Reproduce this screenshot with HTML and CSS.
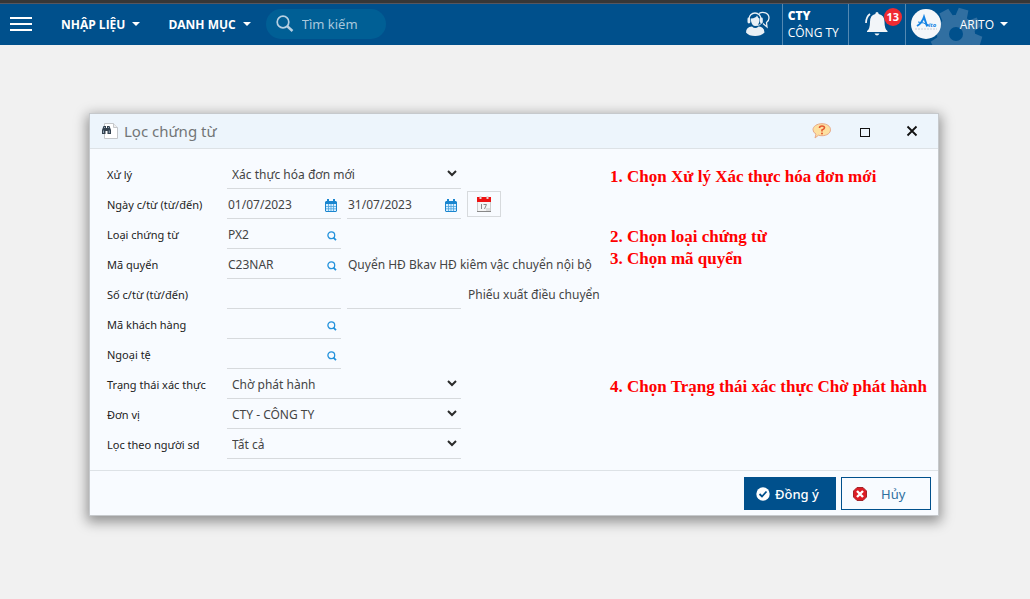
FILE: index.html
```html
<!DOCTYPE html>
<html lang="vi">
<head>
<meta charset="utf-8">
<meta name="viewport" content="width=device-width, initial-scale=1">
<title>Lọc chứng từ</title>
<link rel="stylesheet" href="styles.css">
</head>
<body>
<svg class="sprite" aria-hidden="true">
  <symbol id="i-calendar" viewBox="0 0 12 13">
    <path fill="#1b86cf" d="M1 2h1V0h2v2h4V0h2v2h1l1 1v9l-1 1H1l-1-1V3z"/>
    <path fill="#d9efff" d="M1 5h10v7H1z"/>
    <path d="M3.500 5v7M6 5v7M8.500 5v7M1 7.500h10M1 9.800h10" stroke="#4aa3e0" stroke-width=".8"/>
  </symbol>
  <symbol id="i-lookup" viewBox="0 0 10 10">
    <circle cx="4.3" cy="4.3" r="3.4" fill="none" stroke="#2492dc" stroke-width="1.3"/>
    <path d="M6.4 6.6L9 9.2" stroke="#2492dc" stroke-width="1.8"/>
  </symbol>
  <symbol id="i-chevron" viewBox="0 0 10 7">
    <path d="M1 1l4 4 4-4" fill="none" stroke="#2b2b2b" stroke-width="2"/>
  </symbol>
</svg>

<header class="topbar">
  <button class="menu-btn" aria-label="Menu"><svg width="22" height="14" viewBox="0 0 22 14"><path d="M0 1h22M0 7h22M0 13h22" stroke="#fff" stroke-width="2"/></svg></button>
  <nav class="nav">
    <a href="#" class="nav-link">NHẬP LIỆU<span class="caret"></span></a>
    <a href="#" class="nav-link">DANH MỤC<span class="caret"></span></a>
  </nav>
  <label class="search">
    <svg width="18" height="18" viewBox="0 0 18 18"><circle cx="7" cy="7" r="5.8" fill="none" stroke="#b6d0e2" stroke-width="1.7"/><path d="M11 11l5.5 5" stroke="#b6d0e2" stroke-width="2.4"/></svg>
    <input type="search" placeholder="Tìm kiếm" aria-label="Tìm kiếm">
  </label>
  <button class="support" aria-label="Hỗ trợ">
    <svg width="26" height="26" viewBox="0 0 26 26">
      <path d="M14 2.500c4-2.500 10-.5 10 4.500 0 2-1 3.500-2.500 4.500l.5 4.500-4-3.500" fill="none" stroke="#e8eff5" stroke-width="1.3"/>
      <path d="M4 8a6 6 0 0 1 12 0" fill="none" stroke="#e8eff5" stroke-width="1.3"/>
      <rect x="2.5" y="6.500" width="2.800" height="6" rx="1.400" fill="#e8eff5"/><rect x="15" y="6.500" width="2.800" height="6" rx="1.400" fill="#e8eff5"/>
      <path d="M6 7.500q5-.5 6-3 1 2.500 2.500 3V10q-1 5-4.200 5Q7 15 6 10z" fill="#e8eff5"/>
      <path d="M16.500 12q-1 2.500-5 2.500" fill="none" stroke="#e8eff5"/>
      <path d="M1 21.500Q1 16 7 15.500q3.300 3 6.500 0 6 .5 6 6-3 3.500-9.300 3.500T1 21.500z" fill="#e8eff5"/>
    </svg>
  </button>
  <div class="unit"><strong>CTY</strong><span>CÔNG TY</span></div>
  <button class="bell" aria-label="Thông báo">
    <svg width="24" height="24" viewBox="0 0 24 24"><path fill="#f2f5f8" d="M12 0q1.500 0 1.700 2 5.800 1 5.800 8 0 7 3 9v1H2v-1q3-2 3-9 0-7 5.300-8Q10.500 0 12 0zM9.500 21.500h5q-1 2-2.500 2t-2.500-2z"/><path d="M1 11q0-6 4-9" fill="none" stroke="#f2f5f8" stroke-width="1.700"/></svg>
    <span class="badge">13</span>
  </button>
  <div class="account">
    <svg class="gear" width="56" height="56" viewBox="-28 -28 56 56" aria-hidden="true">
      <g fill="#316fa1" transform="rotate(17)"><circle r="19"/><g id="tooth"><path d="M-6 -17l1-9h10l1 9zM-6 17l1 9h10l1-9z"/></g><use href="#tooth" transform="rotate(45)"/><use href="#tooth" transform="rotate(90)"/><use href="#tooth" transform="rotate(135)"/></g><circle r="7" fill="#00508c"/>
    </svg>
    <svg class="avatar" width="30" height="30" viewBox="0 0 30 30" role="img" aria-label="Arito"><circle cx="15" cy="15" r="15" fill="#f5f7fa"/><path d="M6 17q5-3 7-9l3 9" fill="none" stroke="#1683e4" stroke-width="2"/><path d="M7 13q6 0 11 4" fill="none" stroke="#1683e4" stroke-width="1"/><text x="15" y="18" class="logo-word">rito</text><path d="M4 20h22" stroke="#c9ced6" stroke-width="1" stroke-dasharray="2 1"/></svg>
    <button class="account-btn">ARITO<span class="caret"></span></button>
  </div>
</header>

<main class="stage">
  <form class="dialog" role="dialog" aria-labelledby="dlg-title">
    <div class="dialog-head">
      <svg width="16" height="16" viewBox="0 0 16 16"><path d="M2.500.5h9l4 4v11h-13z" fill="#fff" stroke="#c4c7ca"/><path d="M11.500.5v4h4" fill="#eee" stroke="#c4c7ca"/><path fill="#34424f" d="M0 7l1.500-4h2.500v2h1V3h2.500L9 7v4H5.500V8h-2v3H0z"/><path fill="#91a6b8" d="M1 7.500h1V10H1zM6.800 7.500h1V10h-1zM2 4h1v1H2zM6 4h1v1H6z"/></svg>
      <h1 id="dlg-title">Lọc chứng từ</h1>
      <button type="button" class="tool" aria-label="Trợ giúp"><svg width="20" height="16" viewBox="0 0 20 16"><path d="M10 .7c5 0 8.500 2.600 8.500 6s-3.500 6-8.500 6q-2 0-3.500-.5L3 15l1-4Q1 9.500 1 6.700C1 3.300 5 .7 10 .7z" fill="#fde0a0" stroke="#e8a888"/><path d="M7.500 5q0-2 2.500-2t2.500 1.800Q12.500 6 10 7v1.500" fill="none" stroke="#e4572e" stroke-width="1.600"/><circle cx="10" cy="10.400" r="1" fill="#e4572e"/></svg></button>
      <button type="button" class="tool" aria-label="Phóng to"><svg width="10" height="16" viewBox="0 0 10 16"><rect x=".5" y="5.500" width="9" height="8" fill="none" stroke="#111"/></svg></button>
      <button type="button" class="tool" aria-label="Đóng"><svg width="12" height="12" viewBox="0 0 12 12"><path d="M1.500 1.500l9 9M10.500 1.500l-9 9" stroke="#111" stroke-width="1.800"/></svg></button>
    </div>

    <div class="dialog-body">
      <div class="row">
        <label for="act">Xử lý</label>
        <div class="fields"><span class="field wide"><select id="act"><option>Xác thực hóa đơn mới</option></select><svg class="chev" width="10" height="7"><use href="#i-chevron"/></svg></span></div>
        <p class="note">1. Chọn Xử lý Xác thực hóa đơn mới</p>
      </div>
      <div class="row">
        <label for="from">Ngày c/từ (từ/đến)</label>
        <div class="fields">
          <span class="field"><input id="from" value="01/07/2023"><button type="button" class="pick" aria-label="Chọn ngày"><svg width="12" height="13"><use href="#i-calendar"/></svg></button></span>
          <span class="field"><input value="31/07/2023" aria-label="Đến ngày"><button type="button" class="pick" aria-label="Chọn ngày"><svg width="12" height="13"><use href="#i-calendar"/></svg></button></span>
          <button type="button" class="period" aria-label="Chọn kỳ"><svg width="14" height="16" viewBox="0 0 14 16"><path fill="#f4f4f4" d="M0 6h14v10H0z"/><path fill="#ee1111" d="M0 1h14v5H0z"/><path d="M3.500 0v3M10.500 0v3" stroke="#e6d5d5" stroke-width="2"/><path d="M.5 6v9M13.500 6v9" stroke="#ccc"/><path d="M0 15.500h14" stroke="#888"/><path d="M4.500 8v5M6.500 8.500h3l-2 4.500" fill="none" stroke="#888"/><path d="M9 12h4v3H9z" fill="#ddd"/></svg></button>
        </div>
      </div>
      <div class="row">
        <label for="type">Loại chứng từ</label>
        <div class="fields"><span class="field"><input id="type" value="PX2"><button type="button" class="pick" aria-label="Tìm loại chứng từ"><svg width="10" height="10"><use href="#i-lookup"/></svg></button></span></div>
        <p class="note">2. Chọn loại chứng từ</p>
      </div>
      <div class="row">
        <label for="book">Mã quyển</label>
        <div class="fields"><span class="field"><input id="book" value="C23NAR"><button type="button" class="pick" aria-label="Tìm mã quyển"><svg width="10" height="10"><use href="#i-lookup"/></svg></button></span><span class="desc">Quyển HĐ Bkav HĐ kiêm vậc chuyển nội bộ</span></div>
        <p class="note raised">3. Chọn mã quyển</p>
      </div>
      <div class="row">
        <label for="no">Số c/từ (từ/đến)</label>
        <div class="fields"><span class="field"><input id="no"></span><span class="field"><input aria-label="Đến số"></span><span class="desc">Phiếu xuất điều chuyển</span></div>
      </div>
      <div class="row">
        <label for="cust">Mã khách hàng</label>
        <div class="fields"><span class="field"><input id="cust"><button type="button" class="pick" aria-label="Tìm khách hàng"><svg width="10" height="10"><use href="#i-lookup"/></svg></button></span></div>
      </div>
      <div class="row">
        <label for="cur">Ngoại tệ</label>
        <div class="fields"><span class="field"><input id="cur"><button type="button" class="pick" aria-label="Tìm ngoại tệ"><svg width="10" height="10"><use href="#i-lookup"/></svg></button></span></div>
      </div>
      <div class="row">
        <label for="status">Trạng thái xác thực</label>
        <div class="fields"><span class="field wide"><select id="status"><option>Chờ phát hành</option></select><svg class="chev" width="10" height="7"><use href="#i-chevron"/></svg></span></div>
        <p class="note">4. Chọn Trạng thái xác thực Chờ phát hành</p>
      </div>
      <div class="row">
        <label for="unit">Đơn vị</label>
        <div class="fields"><span class="field wide"><select id="unit"><option>CTY - CÔNG TY</option></select><svg class="chev" width="10" height="7"><use href="#i-chevron"/></svg></span></div>
      </div>
      <div class="row">
        <label for="user">Lọc theo người sd</label>
        <div class="fields"><span class="field wide"><select id="user"><option>Tất cả</option></select><svg class="chev" width="10" height="7"><use href="#i-chevron"/></svg></span></div>
      </div>
    </div>

    <div class="dialog-foot">
      <button type="submit" class="btn primary"><svg width="14" height="14" viewBox="0 0 14 14"><circle cx="7" cy="7" r="6.700" fill="#fff"/><path d="M3.500 7l2.500 2.500 4.500-5" fill="none" stroke="#00508c" stroke-width="1.800"/></svg>Đồng ý</button>
      <button type="button" class="btn cancel"><svg width="14" height="14" viewBox="0 0 14 14"><path d="M4 .5h6L13.500 4v6L10 13.500H4L.5 10V4z" fill="#dc1c24" stroke="#a3262b"/><path d="M4 4l6 6M10 4l-6 6" stroke="#fff" stroke-width="2.400"/></svg><span>Hủy</span></button>
    </div>
  </form>
</main>
</body>
</html>
```

FILE: styles.css
```css
* { box-sizing: border-box; }

body {
  margin: 0;
  min-height: 100vh;
  background: #f1f1f1;
  color: #444;
  font-family: "Noto Sans", "Open Sans", sans-serif;
  font-size: 12px;
}

button, input, select { font: inherit; color: inherit; }
button { padding: 0; border: 0; background: none; cursor: pointer; }
svg { display: block; flex: none; }
.sprite { position: absolute; width: 0; height: 0; }

.topbar {
  display: flex;
  align-items: center;
  height: 45px;
  padding-left: 10px;
  border-top: 3px solid #373737;
  background: #00508c;
  box-shadow: inset 0 1px #56565f;
  color: #fff;
  font-family: "Open Sans", "Noto Sans", sans-serif;
}

.nav { display: flex; gap: 28px; margin: 0 15px 0 29px; }
.nav-link {
  display: flex;
  align-items: center;
  gap: 7px;
  color: #fff;
  font-weight: 700;
  text-decoration: none;
}
.caret {
  border: 4px solid transparent;
  border-top-color: #fff;
  border-bottom: 0;
}

.search {
  display: flex;
  align-items: center;
  gap: 8px;
  width: 120px;
  height: 30px;
  padding: 0 10px;
  border-radius: 15px;
  background: #005f95;
}
.search input {
  width: 100%;
  min-width: 0;
  padding: 0;
  border: 0;
  outline: 0;
  background: none;
  font-family: "Noto Sans", sans-serif;
  font-size: 13px;
}
.search input::placeholder { color: #a9c8dc; opacity: 1; }

.support { margin: 0 11px 0 auto; }
.unit {
  display: flex;
  flex-direction: column;
  justify-content: center;
  width: 66px;
  height: 41px;
  padding-left: 5px;
  border-left: 1px solid #5489b2;
  line-height: 17px;
  white-space: nowrap;
}
.unit strong { font-weight: 800; }
.bell {
  position: relative;
  display: flex;
  align-items: center;
  width: 58px;
  height: 41px;
  padding-left: 16px;
  border: solid #5489b2;
  border-width: 0 1px;
  color: #fff;
}
.badge {
  position: absolute;
  top: 4px;
  right: 3px;
  width: 18px;
  height: 18px;
  border-radius: 9px;
  background: #ef2b32;
  font-size: 11px;
  font-weight: 700;
  line-height: 18px;
}
.account {
  position: relative;
  display: flex;
  align-items: center;
  gap: 19px;
  height: 41px;
  padding: 0 22px 0 5px;
  overflow: hidden;
}
.gear { position: absolute; left: 22px; top: 2px; }
.avatar { position: relative; }
.logo-word { fill: #1683e4; font-size: 6px; font-weight: 700; font-style: italic; }
.account-btn { position: relative; display: flex; align-items: center; gap: 6px; }

.stage { padding: 68px 91px 83px 89px; }
.dialog {
  border: 1px solid #c6c9cc;
  background: #f8fbff;
  box-shadow: 0 4px 12px 2px rgba(0, 0, 0, 0.4);
}

.dialog-head {
  display: flex;
  align-items: center;
  gap: 6px;
  height: 35px;
  padding: 0 20px 0 12px;
  border-bottom: 1px solid #dde2e6;
  background: #edf5fc;
}
.dialog-head h1 { margin: 0 auto 0 0; color: #727577; font-size: 15px; font-weight: 400; }
.tool + .tool { margin-left: 22px; }
.tool:last-child { margin-left: 30px; }

.dialog-body { padding: 10px 17px 11px; }
.row { display: flex; align-items: center; height: 30px; }
.row label { flex: none; width: 120px; color: #222; font-size: 11px; }
.fields { display: flex; flex: none; gap: 6px; width: 383px; height: 30px; align-items: center; }
.field {
  display: flex;
  align-items: center;
  width: 114px;
  height: 30px;
  padding: 0 4px 0 1px;
  border-bottom: 1px solid #d7dadd;
}
.field input {
  flex: 1;
  width: 0;
  height: 29px;
  padding: 2px 0 0;
  border: 0;
  outline: 0;
  background: none;
}
.pick { padding-top: 4px; }
.wide { width: 234px; padding: 0 4px 0 5px; }
.field select {
  flex: 1;
  height: 29px;
  padding: 1px 0 0;
  border: 0;
  outline: 0;
  appearance: none;
  background: none;
}
.period {
  display: flex;
  align-items: center;
  justify-content: center;
  width: 34px;
  height: 26px;
  border: 1px solid #d7dadd;
}
.desc { padding-left: 1px; white-space: nowrap; }
.note {
  margin: 0;
  padding-top: 6px;
  color: #f00;
  font: 700 17px/20px "Liberation Serif", serif;
  white-space: nowrap;
}
.raised { align-self: flex-start; padding-top: 0; }

.dialog-foot {
  display: flex;
  justify-content: flex-end;
  gap: 5px;
  padding: 6px 7px 5px;
  border-top: 1px solid #dde2e6;
}
.btn { display: flex; align-items: center; height: 33px; border: 1px solid #00508c; font-size: 13px; }
.primary { gap: 5px; width: 92px; padding-left: 11px; background: #00508c; color: #fff; font-weight: 500; }
.cancel { gap: 14px; width: 90px; padding-left: 11px; color: #2e6f9e; }
```
